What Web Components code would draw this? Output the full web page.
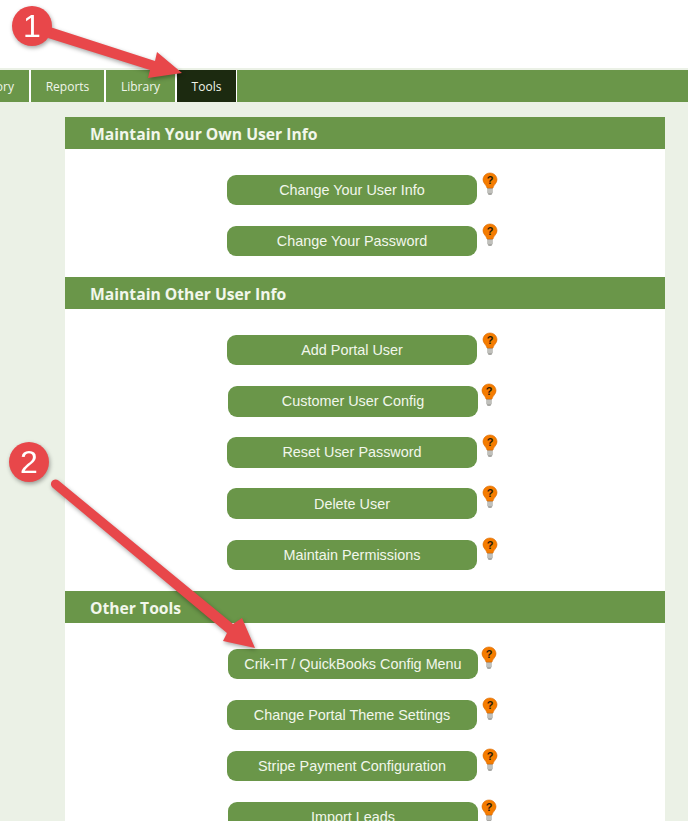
<!DOCTYPE html>
<html lang="en">
<head>
<meta charset="utf-8">
<title>Tools</title>
<style>
  html, body { margin: 0; height: 821px; overflow: hidden; background: #ebf1e6; }
  body { position: relative; font-family: "Liberation Sans", Arial, sans-serif; }
  .top { height: 68px; background: #fff; }
</style>
</head>
<body>
<div class="top"></div>
<top-nav>
  <nav-tab clip style="--tab-width: 31px">ory</nav-tab>
  <nav-tab style="--tab-width: 75px">Reports</nav-tab>
  <nav-tab style="--tab-width: 71px">Library</nav-tab>
  <nav-tab active style="--tab-width: 60px">Tools</nav-tab>
</top-nav>
<tools-panel>
  <tool-section title="Maintain Your Own User Info">
    <tool-button>Change Your User Info</tool-button>
    <tool-button>Change Your Password</tool-button>
  </tool-section>
  <tool-section title="Maintain Other User Info">
    <tool-button>Add Portal User</tool-button>
    <tool-button nudge>Customer User Config</tool-button>
    <tool-button>Reset User Password</tool-button>
    <tool-button>Delete User</tool-button>
    <tool-button>Maintain Permissions</tool-button>
  </tool-section>
  <tool-section title="Other Tools">
    <tool-button nudge>Crik-IT / QuickBooks Config Menu</tool-button>
    <tool-button>Change Portal Theme Settings</tool-button>
    <tool-button>Stripe Payment Configuration</tool-button>
    <tool-button nudge>Import Leads</tool-button>
  </tool-section>
</tools-panel>
<step-arrows></step-arrows>

<script>
class TopNav extends HTMLElement {
  constructor() {
    super();
    this.attachShadow({ mode: "open" });
    this.shadowRoot.innerHTML = /* html */`
    <style>
      :host {
        display: flex;
        height: 32px;
        border-top: 2px solid #ebf1e6;
        background: #6a9649;
      }
    </style>
    <slot></slot>`;
  }
}

class NavTab extends HTMLElement {
  constructor() {
    super();
    this.attachShadow({ mode: "open" });
    this.shadowRoot.innerHTML = /* html */`
    <style>
      :host {
        display: flex;
        align-items: center;
        justify-content: center;
        box-sizing: border-box;
        width: var(--tab-width);
        height: 32px;
        border-right: 2px solid #fff;
        font: 12px "Open Sans", sans-serif;
        color: #f0f5ea;
      }
      /* first tab runs off the left edge of the window */
      :host([clip]) { justify-content: flex-end; padding-right: 15px; }
      :host([active]) { background: #1c2a10; border-right-width: 1px; }
    </style>
    <slot></slot>`;
  }
}

class ToolsPanel extends HTMLElement {
  constructor() {
    super();
    this.attachShadow({ mode: "open" });
    this.shadowRoot.innerHTML = /* html */`
    <style>
      :host {
        display: block;
        width: 600px;
        height: 719px;
        margin-left: 65px;
        padding-top: 15px;
        box-sizing: border-box;
        background: linear-gradient(#ebf1e6 15px, #fff 15px);
        overflow: hidden;
      }
    </style>
    <slot></slot>`;
  }
}

class ToolSection extends HTMLElement {
  constructor() {
    super();
    this.attachShadow({ mode: "open" });
    this.shadowRoot.innerHTML = /* html */`
    <style>
      :host { display: block; }
      h2 {
        margin: 0;
        height: 32px;
        padding-left: 25px;
        background: #6a9649;
        font: 700 15.7px/34px "Open Sans", sans-serif;
        color: #f2f7ec;
      }
      .rows {
        display: flex;
        flex-direction: column;
        gap: 20.875px;
        padding: 26px 0 21px;
      }
    </style>
    <h2></h2>
    <div class="rows"><slot></slot></div>`;
    this.shadowRoot.querySelector("h2").textContent = this.getAttribute("title");
    this.removeAttribute("title");
  }
}

class ToolButton extends HTMLElement {
  constructor() {
    super();
    this.attachShadow({ mode: "open" });
    this.shadowRoot.innerHTML = /* html */`
    <style>
      :host {
        display: flex;
        height: 30.1875px;
        padding-left: 162px;
      }
      :host([nudge]) { padding-left: 163px; }
      :host([nudge]) svg { margin-left: 3px; }
      button {
        width: 250px;
        height: 100%;
        padding: 0;
        border: 0;
        border-radius: 9px;
        background: #6a9649;
        font: 14.4px "Liberation Sans", Arial, sans-serif;
        color: #f2f7ec;
      }
      svg { display: block; margin: -3px 0 0 5px; }
    </style>
    <button><slot></slot></button>
    <svg width="16" height="24" viewBox="0 0 16 24">
      <path d="M5.2 16h5.600v4.600l-1.400 2.400H6.600l-1.400-2.400z" fill="#a8a8a4"/>
      <path d="M5.200 18h5.600M5.200 20h5.600" stroke="#e4e4e0" stroke-width=".8"/>
      <path d="M8 1C4 1 1 4 1 7.800c0 3.400 3.400 5 4 8.200h6c.6-3.200 4-4.800 4-8.200C15 4 12 1 8 1z" fill="#f57c00" stroke="#d96a00" stroke-width=".6"/>
      <text x="8" y="12" text-anchor="middle" font-family="Liberation Sans, sans-serif" font-weight="700" font-size="11" fill="#2a1a08">?</text>
    </svg>`;
  }
}

class StepArrows extends HTMLElement {
  constructor() {
    super();
    this.attachShadow({ mode: "open" });
    this.shadowRoot.innerHTML = /* html */`
    <style>
      :host { position: absolute; inset: 0; display: block; pointer-events: none; }
      svg { display: block; filter: drop-shadow(1px 2px 2px rgba(0, 0, 0, .35)); }
      text { font: 32px "Liberation Sans", Arial, sans-serif; fill: #fff; text-anchor: middle; }
    </style>
    <svg width="688" height="821" viewBox="0 0 688 821">
      <g fill="#e8474a">
        <path d="M50 27L155 61l2-9 25 21-34 5 2-8L48 38z"/>
        <circle cx="32" cy="26" r="20"/>
        <circle cx="29" cy="462" r="20"/>
        <path d="M58.500 480.500L233 624l9-6 13 30-32-7 4-8L52.500 487.500a4.500 4.500 0 0 1 6-7z"/>
      </g>
      <text x="32" y="37">1</text>
      <text x="29" y="473">2</text>
    </svg>`;
  }
}

customElements.define("top-nav", TopNav);
customElements.define("nav-tab", NavTab);
customElements.define("tools-panel", ToolsPanel);
customElements.define("tool-section", ToolSection);
customElements.define("tool-button", ToolButton);
customElements.define("step-arrows", StepArrows);
</script>
</body>
</html>
